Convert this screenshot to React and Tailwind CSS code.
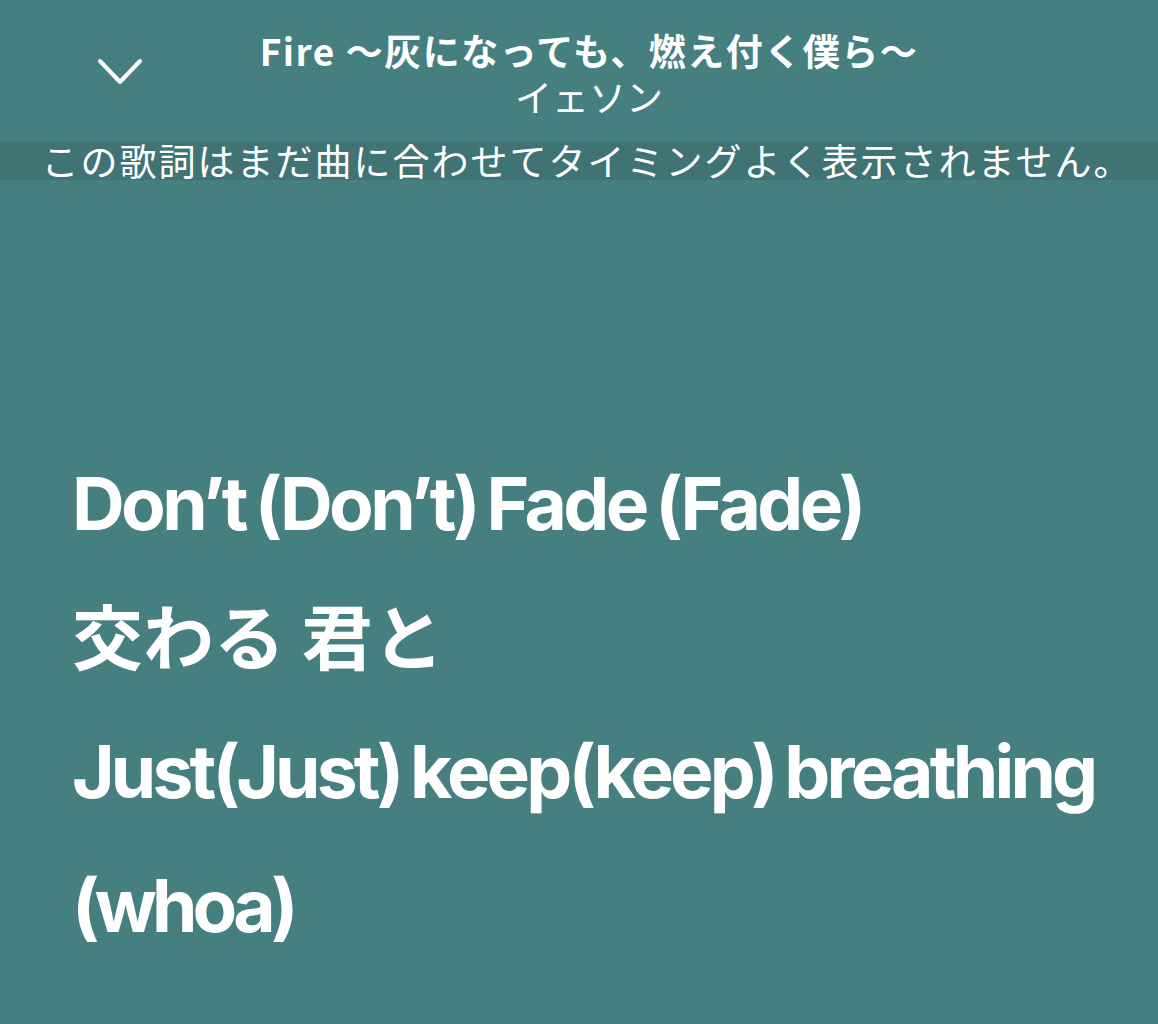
export default function App() {
  const lyrics = [
    { t: "Don\u2019t (Don\u2019t) Fade (Fade)", c: "text-[73px] tracking-[-3.6px] [word-spacing:-4px]" },
    { t: "交わる 君と", c: "text-[71px] tracking-[0px]" },
    { t: "Just(Just) keep(keep) breathing", c: "text-[73px] tracking-[-3.8px] [word-spacing:-4px]" },
    { t: "(whoa)", c: "text-[73px] tracking-[-4.8px]" },
  ];
  return (
    <div className="w-[1158px] h-[1024px] bg-[#467f80] overflow-hidden text-white">
      <div className="grid grid-cols-[160px_1fr_140px] pt-[28px]">
        <div className="pl-[97px] pt-[30px]">
          <svg width="46" height="28" viewBox="0 0 46 28" fill="none">
            <path d="M3 3 L23 24 L43 3" stroke="white" strokeWidth="4" strokeLinecap="round" strokeLinejoin="round" />
          </svg>
        </div>
        <div className="flex flex-col items-center" style={{ fontFamily: '"Noto Sans CJK JP", "Noto Sans", sans-serif' }}>
          <div className="text-[37px] font-bold leading-[44px] tracking-[1.5px] whitespace-nowrap">Fire 〜灰になっても、燃え付く僕ら〜</div>
          <div className="mt-[2px] text-[37px] leading-[44px] whitespace-nowrap">イェソン</div>
        </div>
        <div />
      </div>
      <div
        className="mt-[23px] h-[39px] bg-[#3f7374] flex items-center justify-center pl-[16px] text-[37px] leading-[39px] tracking-[2px] whitespace-nowrap"
        style={{ fontFamily: '"Noto Sans CJK JP", sans-serif' }}
      >
        この歌詞はまだ曲に合わせてタイミングよく表示されません。
      </div>
      <div className="pl-[72px] pt-[257px] flex flex-col" style={{ fontFamily: 'Inter, "Noto Sans CJK JP", sans-serif' }}>
        {lyrics.map((l, i) => (
          <div key={i} className={`font-bold leading-[134px] whitespace-nowrap ${l.c}`}>
            {l.t}
          </div>
        ))}
      </div>
    </div>
  );
}
